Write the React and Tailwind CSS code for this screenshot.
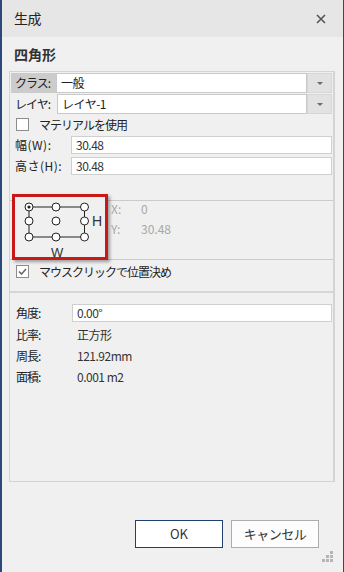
import React from 'react';

const jp = "font-['Meiryo_UI','Noto_Sans_CJK_JP',sans-serif]";

function DropArrow() {
  return (
    <svg width="8" height="5" viewBox="0 0 8 5">
      <path d="M1 1h6L4 4z" fill="#6b6b6b" />
    </svg>
  );
}

function SelectRow({ label, value, labelClass }) {
  return (
    <div className="flex h-[20px]">
      <div className={`flex items-center pl-[4px] tracking-[-1px] ${labelClass}`}>{label}</div>
      <div className="flex-1 flex items-center bg-white border border-[#c9c9c9] pl-[4px] tracking-[-0.5px] text-[#222]">
        {value}
      </div>
      <div className="w-[25px] flex items-center justify-center bg-[#e2e2e2] border border-[#d6d6d6]">
        <DropArrow />
      </div>
    </div>
  );
}

function Check({ checked }) {
  return (
    <div className="w-[13px] h-[13px] border border-[#8c8c8c] bg-white flex items-center justify-center">
      {checked && (
        <svg width="11" height="11" viewBox="0 0 11 11">
          <path d="M2 5.5l2.5 2.5L9 3" fill="none" stroke="#6a6a6a" strokeWidth="1.6" />
        </svg>
      )}
    </div>
  );
}

function InputRow({ label, value, className = '', labelClass = 'tracking-[-1px]' }) {
  return (
    <div className={`flex items-center pl-[5px] pr-[1px] ${className}`}>
      <div className={`w-[56px] ${labelClass}`}>{label}</div>
      <div className="flex-1 h-[18px] flex items-center bg-white border border-[#cfcfcf] pl-[4px] text-[#333] tracking-[-0.5px]">
        {value}
      </div>
    </div>
  );
}

function Diagram() {
  const cols = [19, 46, 74.5];
  const rows = [6, 20, 36];
  return (
    <svg width="98" height="58" viewBox="0 0 98 58" className="shrink-0">
      <rect x="19" y="6" width="55.5" height="30" fill="none" stroke="#222" strokeWidth="1" />
      {rows.map((y) =>
        cols.map((x) => (
          <circle key={`${x}-${y}`} cx={x} cy={y} r="4" fill="#fff" stroke="#222" strokeWidth="1" />
        ))
      )}
      <circle cx="19" cy="6" r="1.6" fill="#222" />
      <text x="82" y="25" fontSize="14" fill="#333" fontFamily="Liberation Sans, sans-serif">H</text>
      <text x="41" y="56" fontSize="13" fill="#333" fontFamily="Liberation Sans, sans-serif">W</text>
    </svg>
  );
}

export default function App() {
  return (
    <div className={`relative w-[344px] h-[572px] flex flex-col bg-[#f0f0f0] border-l-2 border-r border-[#2b4a78] text-[12px] text-[#222] overflow-hidden ${jp}`}>
      {/* header */}
      <div className="h-[37px] shrink-0 flex items-center justify-between bg-[#e6e6e6] pl-[12px] pr-[17px]">
        <span className="text-[14px] text-[#222] tracking-[-0.5px]">生成</span>
        <svg width="10" height="10" viewBox="0 0 10 10">
          <path d="M1 1l8 8M9 1l-8 8" stroke="#555" strokeWidth="1.6" />
        </svg>
      </div>

      <div className="h-[34px] shrink-0 flex items-center pl-[12px] text-[14px] font-bold text-[#333]">四角形</div>

      {/* panel */}
      <div className="ml-[7px] w-[326px] h-[411px] shrink-0 border border-[#d4d4d4] border-r-2 flex flex-col">
        <div className="px-[1px] pt-[1px] flex flex-col gap-[1px]">
          <SelectRow label="クラス:" value="一般" labelClass="w-[45px] bg-[#cccccc]" />
          <SelectRow label="レイヤ:" value="レイヤ-1" labelClass="w-[46px]" />
        </div>

        <div className="h-[21px] flex items-center pl-[6px]">
          <Check checked={false} />
          <span className="ml-[10px] tracking-[-1px]">マテリアルを使用</span>
        </div>

        <InputRow label="幅(W):" value="30.48" className="mt-[1px]" labelClass="tracking-[0.5px]" />
        <InputRow label="高さ(H):" value="30.48" className="mt-[3px]" labelClass="tracking-[0.5px]" />

        <div className="mt-[25px] h-px bg-[#cbcbcb]" />

        <div className="relative h-[58px] flex">
          <div className="absolute left-[2px] -top-[7px] w-[96px] h-[66px] border-[3px] border-[#c81818] bg-[#f0f0f0] shadow-[2px_2px_3px_rgba(0,0,0,0.35)]" />
          <div className="relative">
            <Diagram />
          </div>
          <div className="relative flex flex-col pt-[1px] text-[#a8a8a8]">
            <div className="flex h-[14px] items-center">
              <span className="w-[30px] ml-[3px]">X:</span>
              <span>0</span>
            </div>
            <div className="flex h-[14px] items-center mt-[6px]">
              <span className="w-[30px] ml-[3px]">Y:</span>
              <span>30.48</span>
            </div>
          </div>
        </div>

        <div className="h-px bg-[#cbcbcb]" />

        <div className="h-[31px] flex items-center pl-[6px] pb-[8px]">
          <Check checked />
          <span className="ml-[10px] tracking-[-1px]">マウスクリックで位置決め</span>
        </div>

        <div className="h-[2px] bg-[#d6d6d6]" />

        <InputRow label="角度:" value="0.00°" className="mt-[11px] pl-[6px]" />
        <div className="mt-[2px] flex flex-col pl-[6px] text-[#222]">
          {[
            ['比率:', '正方形'],
            ['周長:', '121.92mm'],
            ['面積:', '0.001 m2'],
          ].map(([k, v]) => (
            <div key={k} className="h-[21px] flex items-center">
              <span className="w-[61px] tracking-[-1px]">{k}</span>
              <span className="text-[#333] tracking-[-0.5px]">{v}</span>
            </div>
          ))}
        </div>
      </div>

      {/* buttons */}
      <div className="mt-[38px] flex justify-end gap-[8px] pr-[24px]">
        <button className="w-[88px] h-[28px] bg-white border border-[#1f3f6f] text-[13px] text-[#333]">OK</button>
        <button className="w-[88px] h-[28px] bg-[#fdfdfd] border border-[#adadad] text-[13px] text-[#333] tracking-[-0.5px]">キャンセル</button>
      </div>

      <svg width="11" height="11" viewBox="0 0 11 11" className="absolute right-[10px] bottom-[10px]">
        <rect x="8" y="0" width="3" height="3" fill="#b5b5b5" />
        <rect x="4" y="4" width="3" height="3" fill="#b5b5b5" />
        <rect x="8" y="4" width="3" height="3" fill="#b5b5b5" />
        <rect x="0" y="8" width="3" height="3" fill="#b5b5b5" />
        <rect x="4" y="8" width="3" height="3" fill="#b5b5b5" />
        <rect x="8" y="8" width="3" height="3" fill="#b5b5b5" />
      </svg>
    </div>
  );
}
